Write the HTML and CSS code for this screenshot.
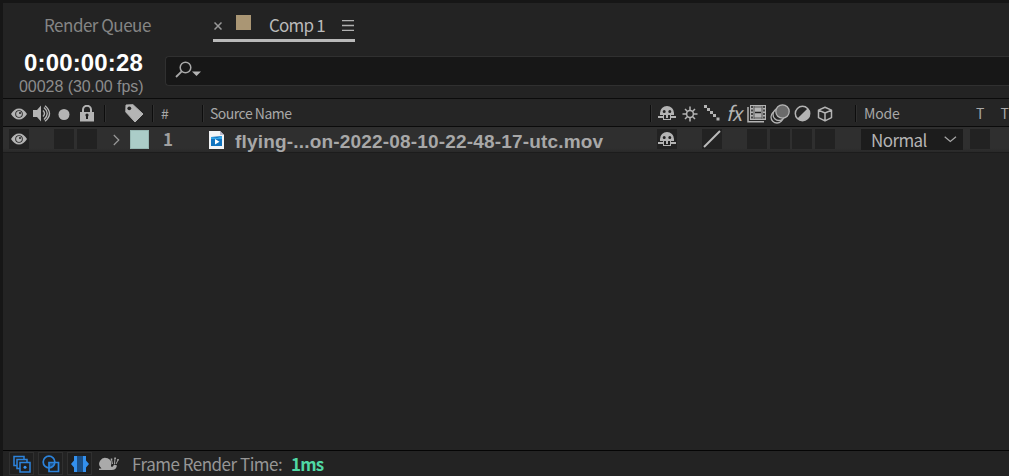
FILE: index.html
```html
<!DOCTYPE html>
<html lang="en">
<head>
<meta charset="utf-8">
<title>Timeline</title>
<link rel="stylesheet" href="styles.css">
</head>
<body>
<svg class="defs" width="0" height="0">
  <symbol id="eye" viewBox="0 0 16 12"><path fill="#b4b4b4" fill-rule="evenodd" d="M0 6C2 2.500 4.800.500 8 .500s6 2 8 5.500c-2 3.500-4.800 5.500-8 5.500S2 9.500 0 6zM8 2.200a3.800 3.800 0 1 0 0 7.600 3.800 3.800 0 0 0 0-7.600z"/><circle cx="8" cy="6" r="2.900" fill="#b4b4b4"/><circle cx="9" cy="5" r="1" fill="#222"/></symbol>
  <symbol id="shy" viewBox="0 0 18 16"><path fill="#b4b4b4" fill-rule="evenodd" d="M2 10V8a7 7 0 0 1 14 0v2zM6.200 5a1.500 1.500 0 1 0 0 3 1.500 1.500 0 0 0 0-3zm5.600 0a1.500 1.500 0 1 0 0 3 1.500 1.500 0 0 0 0-3z"/><path fill="#b4b4b4" d="M8 9h2v4H8zM0 11h5v2H0zM13 11h5v2h-5zM5 10h1v5H5zM12 10h1v5h-1zM6 14h6v1H6z"/></symbol>
</svg>
<div class="panel">
  <div class="tabs">
    <div class="tab queue">Render Queue</div>
    <div class="tab active">
      <svg class="close" width="8" height="8" viewBox="0 0 8 8"><path d="M.5.5l7 7M7.500.5l-7 7" stroke="#999" stroke-width="1.500"/></svg>
      <span class="swatch"></span>
      <span class="tab-name">Comp 1</span>
      <svg class="menu" width="12" height="11" viewBox="0 0 12 11"><path d="M0 .5h12M0 5.500h12M0 10.500h12" stroke="#b0b0b0" stroke-width="1.400"/></svg>
    </div>
  </div>
  <div class="toolbar">
    <div class="time"><div class="timecode">0:00:00:28</div><div class="frames">00028 (30.00 fps)</div></div>
    <div class="search"><svg width="28" height="18" viewBox="0 0 28 18"><circle cx="10.500" cy="6.500" r="5.300" fill="none" stroke="#a8a8a8" stroke-width="1.500"/><path d="M6.700 10.300L1 16" stroke="#a8a8a8" stroke-width="1.800"/><path d="M17 10.500h9l-4.500 4.500z" fill="#b4b4b4"/></svg></div>
  </div>
  <div class="line head">
    <div class="cells av">
      <span><svg width="16" height="12"><use href="#eye"/></svg></span>
      <span><svg width="19" height="17" viewBox="0 0 19 17"><path d="M1 5h4l4-4.500v16L5 12H1z" fill="#b4b4b4"/><path d="M11 5.500q3 3 0 6M12 2.500q6.500 6 0 12M13 .7q9 7.800 0 15.600" fill="none" stroke="#b4b4b4" stroke-width="1.400"/></svg></span>
      <span><svg width="12" height="12"><circle cx="6" cy="6.500" r="5.500" fill="#b4b4b4"/></svg></span>
      <span><svg width="16" height="17" viewBox="0 0 16 17"><path d="M4 8V4.800a4 4 0 0 1 8 0V8" fill="none" stroke="#b4b4b4" stroke-width="2"/><path fill="#b4b4b4" d="M1 7h14v9.500H1z"/><path d="M8 9v5" stroke="#222" stroke-width="2"/><circle cx="8" cy="10" r="1.600" fill="#222"/></svg></span>
    </div>
    <div class="col label"><svg width="19" height="19" viewBox="0 0 19 19"><path fill="#b4b4b4" stroke="#b4b4b4" stroke-linejoin="round" d="M1 1l7-.3 10 9.300-8 8L.8 8z"/><circle cx="4.300" cy="4.300" r="1.900" fill="#252525"/></svg></div>
    <div class="col number">#</div>
    <div class="col name">Source Name</div>
    <div class="col cells switches">
      <span><svg class="up" width="18" height="16"><use href="#shy"/></svg></span>
      <span><svg width="16" height="16" viewBox="0 0 16 16"><g fill="none" stroke="#b4b4b4" stroke-width="1.500"><circle cx="8" cy="8" r="3.400"/><path d="M8 .5v4M8 11.500v4M.5 8h4M11.500 8h4M3 3l2.500 2.500M10.500 10.500L13 13M3 13l2.500-2.500M10.500 5.500L13 3"/></g></svg></span>
      <span><svg class="up" width="16" height="16" viewBox="0 0 16 16"><path fill="#b4b4b4" d="M0 0h3v3H0zM3 3h3v3H3zM6 6h3v3H6zM9 9h3v3H9zM12.500 12.500h3v3h-3z"/></svg></span>
      <span class="fx">fx</span>
      <span><svg width="20" height="18" viewBox="0 0 20 18"><path fill="none" stroke="#b4b4b4" stroke-width="1.500" d="M1 2v14.800h16"/><path fill="#b4b4b4" d="M3 0h16v15H3z"/><path stroke="#222" stroke-width="1.500" d="M8 7.500h6"/><path stroke="#222" stroke-width="1.500" stroke-dasharray="2 1.500" d="M5 1v13M17 1v13"/><path stroke="#555" d="M7 1v13M15 1v13M7 2h8M7 13h8"/></svg></span>
      <span><svg width="20" height="20" viewBox="0 0 20 20"><g fill="#252525" stroke="#b4b4b4" stroke-width="1.300"><circle cx="7" cy="13" r="6"/><circle cx="9" cy="10.500" r="6"/><circle cx="12.500" cy="7.500" r="6.700" fill="#6a6a6a"/></g></svg></span>
      <span><svg width="17" height="17" viewBox="0 0 17 17"><circle cx="8.500" cy="8.500" r="7.200" fill="#252525" stroke="#b4b4b4" stroke-width="1.500"/><path fill="#b4b4b4" d="M3.200 13.800L13.800 3.200a7.500 7.500 0 0 1-10.600 10.600z"/></svg></span>
      <span><svg width="16" height="16" viewBox="0 0 16 16"><path fill="none" stroke="#b4b4b4" stroke-width="1.500" stroke-linejoin="round" d="M8 1.200l6.500 2.900v7.500L8 14.900l-6.500-3.300V4.100zM1.500 4.100L8 7l6.500-2.900M8 7v7.900"/></svg></span>
    </div>
    <div class="col mode">Mode</div>
    <div class="t-one">T</div><div class="t-two">T</div>
  </div>
  <div class="line layer">
    <div class="cells av">
      <span class="box"><svg width="16" height="12"><use href="#eye"/></svg></span><span></span><span class="box"></span><span class="box"></span>
    </div>
    <div class="label"><svg width="7" height="12" viewBox="0 0 7 12"><path d="M.8 1l5 5-5 5" fill="none" stroke="#999" stroke-width="1.200"/></svg><i class="color"></i></div>
    <div class="number">1</div>
    <div class="name"><svg width="15" height="18" viewBox="0 0 15 18"><path fill="#f2f4f6" d="M0 0h11l4 4v14H0z"/><path fill="#bbc" d="M11 0v4h4z"/><path fill="#1175c1" d="M2 6l11-1v10H2z"/><path fill="#35a7e9" d="M2 6l6 1 5-2v3H2z"/><path fill="#fff" d="M6 8l4.500 2.700L6 13.500z"/></svg><b>flying-...on-2022-08-10-22-48-17-utc.mov</b></div>
    <div class="cells switches">
      <span class="box"><svg width="18" height="16"><use href="#shy"/></svg></span><span></span>
      <span class="box"><svg width="18" height="18" viewBox="0 0 18 18"><path d="M1 17L17 1" stroke="#bbb" stroke-width="2"/></svg></span><span></span>
      <span class="box"></span><span class="box"></span><span class="box"></span><span class="box"></span>
    </div>
    <div class="select"><span>Normal</span><svg width="13" height="7" viewBox="0 0 13 7"><path d="M.7.7l5.600 4.800L12 .7" fill="none" stroke="#a8a8a8" stroke-width="1.200"/></svg></div>
    <div class="matte"></div>
  </div>
  <div class="empty"></div>
  <div class="footer">
    <span class="toggle"><svg width="20" height="19" viewBox="0 0 20 19"><g fill="#202020" stroke="#2c83db" stroke-width="1.500"><path d="M2 1.500h10v9H2z"/><path d="M5 4.500h10v9H5z"/><path d="M8 7.500h10v9.500H8z"/></g><circle cx="13" cy="12.200" r="1.500" fill="#3795f5"/></svg></span>
    <span class="toggle"><svg width="20" height="19" viewBox="0 0 20 19"><g fill="none" stroke="#2c83db" stroke-width="1.700"><path fill="#1b4f86" stroke="none" d="M8 8h6a6 6 0 0 1-6 5z"/><circle cx="8" cy="7" r="5.800"/><path d="M8 7.500h9.500v9H8z"/></g></svg></span>
    <span class="toggle"><svg width="20" height="19" viewBox="0 0 20 19"><path fill="#1b4f86" d="M5 1h10v16H5z"/><path fill="#3390ee" d="M4 1h3v16H4v-4.500L1 9l3-3.500zM16 1h-3v16h3v-4.500L19 9l-3-3.500z"/></svg></span>
    <span class="snail"><svg width="20" height="14" viewBox="0 0 20 14"><path fill="#aaa" d="M2.500 11.500A6 6 0 1 1 12 8.500c0 2 2 2 3-1l3 1c-1 4-3 4.500-6 4.500H0v-1.500z"/><path d="M13.500 7l-1-4.500M15.500 7l.5-5.500M17 7l2-4" stroke="#aaa"/><path d="M11.700 1.500h1.600v1.600h-1.600zM15.300.5h1.600v1.600h-1.600zM18.200 2h1.600v1.600h-1.600z" fill="#aaa"/></svg></span>
    <span class="render">Frame Render Time:</span><b class="ms">1ms</b>
  </div>
</div>
</body>
</html>
```
FILE: styles.css
```css
* { box-sizing: border-box; }
body {
  margin: 0;
  width: 1009px;
  height: 476px;
  overflow: hidden;
  background: #161616;
  color: #a8a8a8;
  font-family: "Noto Sans CJK SC", "Noto Sans", sans-serif;
  padding: 3px 0 0 3px;
}
svg { display: block; flex: none; }
.defs { display: none; }
.panel {
  width: 1006px;
  height: 473px;
  background: #232323;
  display: flex;
  flex-direction: column;
  white-space: nowrap;
}
.tabs { height: 44px; display: flex; padding-left: 41px; font-size: 17px; line-height: 39px; letter-spacing: -.5px; flex: none; }
.queue { width: 169px; padding-top: 2px; color: #858585; }
.active { width: 142px; height: 39px; border-bottom: 3px solid #b9b9b9; display: flex; align-items: center; padding-left: 1px; }
.close { margin-top: 9px; }
.swatch { width: 15px; height: 15px; background: #aa9674; margin: 2px 18px 0 14px; }
.tab-name { color: #bababa; width: 73px; padding-top: 7px; letter-spacing: -.8px; }
.menu { margin-top: 9px; }
.toolbar { height: 51px; display: flex; padding-top: 3px; flex: none; }
.time { width: 162px; padding-left: 16px; font-family: "Liberation Sans", Arial, sans-serif; }
.timecode { color: #fff; font-weight: bold; font-size: 24px; line-height: 26px; letter-spacing: .15px; padding-left: 5px; }
.frames { color: #8c8c8c; font-size: 16px; line-height: 22px; letter-spacing: -.05px; }
.search { flex: 1; height: 30px; margin-top: 6px; border: 1px solid #303030; border-right: 0; border-radius: 4px 0 0 4px; background: #171717; padding: 4px 0 0 9px; }
.line { display: flex; align-items: center; flex: none; padding-left: 5px; overflow: hidden; }
.head { height: 29px; border-top: 1px solid #0b0b0b; border-bottom: 1px solid #0b0b0b; background: #252525; font-size: 14px; line-height: 27px; padding-top: 2px; }
.layer { height: 26px; background: linear-gradient(#2f2f2f, #2f2f2f 21px, #292929); border-bottom: 1px solid #1c1c1c; }
.cells { display: flex; align-items: center; flex: none; }
.cells > span { width: 22.5px; height: 20px; display: flex; align-items: center; justify-content: center; flex: none; }
.cells > .box { width: 20px; margin: 0 1.25px; background: #222; }
.layer .cells { margin-top: -1px; }
.up { margin-bottom: 2px; }
.av { width: 96px; }
.label, .number, .name, .switches { flex: none; }
.head .col { height: 17px; display: flex; align-items: center; box-shadow: inset 1px 0 #0d0d0d, inset 2px 0 #303030; }
.label { width: 48px; display: flex; align-items: center; }
.head .label { padding-left: 21px; }
.layer .label { padding-left: 9px; gap: 10px; }
.color { width: 19px; height: 19px; background: #abcdc8; border: 1px solid #97b8b3; }
.number { width: 50px; padding-left: 9px; }
.layer .number { padding-left: 11px; font-size: 17px; line-height: 24px; font-weight: bold; color: #a0a0a0; margin-top: -2px; }
.name { width: 448px; padding-left: 8px; display: flex; align-items: center; }
.head .name { letter-spacing: -.5px; }
.layer .name { padding-left: 7px; gap: 11px; font: 19px/20px "Liberation Sans", Arial, sans-serif; letter-spacing: .18px; color: #a8a8a8; }
.layer .name b { padding-top: 4px; }
.switches { width: 205px; padding-left: 6px; }
.cells > .fx { font: italic 20px/20px "Noto Sans CJK SC", sans-serif; color: #b4b4b4; padding-bottom: 2px; letter-spacing: -.5px; margin: 0 1px 0 -1px; }
.mode { width: 119px; padding-left: 9px; letter-spacing: -.15px; }
.t-one { width: 25px; padding-left: 4px; }
.t-two { padding-left: 4px; }
.select { width: 102px; height: 21px; margin-left: 6px; background: #1c1c1c; display: flex; align-items: center; justify-content: space-between; padding: 0 6px 0 10px; font-size: 17px; line-height: 21px; letter-spacing: -.6px; color: #b4b4b4; }
.matte { width: 20px; height: 20px; margin: -1px 0 0 7px; background: #222; }
.empty { flex: 1; }
.footer { height: 26px; border-top: 1px solid #050505; display: flex; align-items: center; padding-left: 6px; font-size: 17px; line-height: 24px; letter-spacing: -.5px; flex: none; }
.toggle { width: 25px; height: 23px; border: 1px solid #303030; background: #202020; display: flex; justify-content: center; align-items: center; padding-top: 2px; margin-right: 4px; }
.snail { margin-left: 3px; width: 33px; }
.render { color: #969696; width: 159px; }
.ms { color: #50d8a5; letter-spacing: -.8px; }
```
